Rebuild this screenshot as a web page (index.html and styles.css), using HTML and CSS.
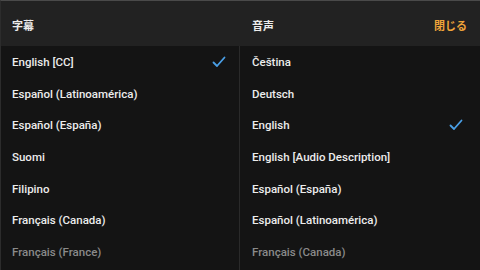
FILE: index.html
```html
<!DOCTYPE html>
<html lang="ja">
<head>
<meta charset="utf-8">
<link rel="stylesheet" href="styles.css">
</head>
<body>
<div class="panel">
  <div class="header">
    <div class="hcol">字幕</div>
    <div class="hcol hright"><span>音声</span><span class="close">閉じる</span></div>
  </div>
  <div class="body">
    <ul class="col left">
      <li class="sel">English [CC]<svg class="check" viewBox="0 0 14 12"><path d="M1.5 6.5 L5 10 L12.5 1.5" /></svg></li>
      <li>Español (Latinoamérica)</li>
      <li>Español (España)</li>
      <li>Suomi</li>
      <li>Filipino</li>
      <li>Français (Canada)</li>
      <li class="fade">Français (France)</li>
    </ul>
    <ul class="col right">
      <li>Čeština</li>
      <li>Deutsch</li>
      <li class="sel">English<svg class="check" viewBox="0 0 14 12"><path d="M1.5 6.5 L5 10 L12.5 1.5" /></svg></li>
      <li>English [Audio Description]</li>
      <li>Español (España)</li>
      <li>Español (Latinoamérica)</li>
      <li class="fade">Français (Canada)</li>
    </ul>
  </div>
</div>
</body>
</html>
```
FILE: styles.css
```css
* { box-sizing: border-box; }
html, body { margin: 0; padding: 0; }
body {
  width: 480px;
  height: 270px;
  overflow: hidden;
  background: #141414;
  font-family: Roboto, "Noto Sans CJK JP", sans-serif;
  color: #ececec;
}
.panel {
  width: 480px;
  height: 270px;
  display: flex;
  flex-direction: column;
  border-top: 1px solid #4a4a4a;
  border-left: 1px solid #2c2c2c;
}
.header {
  height: 45px;
  background: #222222;
  display: flex;
  font-family: "Noto Sans CJK JP", sans-serif;
  font-weight: 700;
  font-size: 11px;
}
.hcol {
  width: 239px;
  padding-left: 11px;
  padding-top: 2px;
  display: flex;
  align-items: center;
}
.hright {
  flex: 1;
  justify-content: space-between;
  padding-left: 12px;
  padding-right: 13px;
}
.close { color: #f0a43a; font-size: 11px; }
.body {
  flex: 1;
  display: flex;
}
.col {
  list-style: none;
  margin: 0;
  padding: 0;
}
.left { width: 239px; border-right: 1px solid #2a2a2a; }
.right { flex: 1; }
.col li {
  height: 31.7px;
  display: flex;
  align-items: center;
  justify-content: space-between;
  font-size: 11.5px;
  font-weight: 500;
  padding-left: 11px;
  padding-right: 13px;
}
.right li { padding-left: 12px; padding-right: 17px; }
.col li.fade { color: #8a8a8a; }
.check {
  width: 14px;
  height: 12px;
  fill: none;
  stroke: #4a9fe6;
  stroke-width: 1.8;
  stroke-linecap: round;
  stroke-linejoin: round;
}
```
